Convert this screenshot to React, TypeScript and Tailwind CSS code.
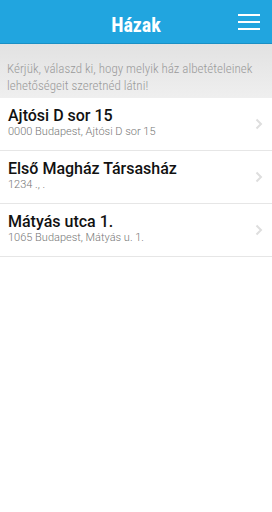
import React from "react";

const items = [
  { title: "Ajtósi D sor 15", sub: "0000 Budapest, Ajtósi D sor 15" },
  { title: "Első Magház Társasház", sub: "1234 ., ." },
  { title: "Mátyás utca 1.", sub: "1065 Budapest, Mátyás u. 1." },
];

export default function App() {
  return (
    <div className="w-[272px] h-[512px] bg-white" style={{ fontFamily: "Roboto, 'Noto Sans', sans-serif" }}>
      <header className="h-[44px] bg-[#21a5df] border-b border-[#1a8fc4] flex items-start justify-center pt-[15px] relative">
        <h1 className="text-white font-bold text-[20px] leading-none font-stretch-condensed">Házak</h1>
        <div className="absolute right-[12px] top-[14px] flex flex-col gap-[5px]">
          <span className="block w-[22px] h-[2px] bg-white" />
          <span className="block w-[22px] h-[2px] bg-white" />
          <span className="block w-[22px] h-[2px] bg-white" />
        </div>
      </header>
      <div className="h-[54px] bg-gradient-to-b from-[#e2e2e2] to-[#efefef] px-[7px] pt-[16px] text-[13px] leading-[17px] font-light text-[#9a9a9a] font-stretch-condensed">
        Kérjük, válaszd ki, hogy melyik ház albetételeinek lehetőségeit szeretnéd látni!
      </div>
      <ul>
        {items.map((it) => (
          <li key={it.title} className="h-[53px] border-b border-[#e6e6e6] flex items-center pl-[8px] pr-[8px]">
            <div className="flex-1 flex flex-col self-start pt-[8px]">
              <span className="text-[16px] leading-[20px] font-medium text-[#111]">{it.title}</span>
              <span className="text-[11px] leading-[11px] text-[#777] font-light">{it.sub}</span>
            </div>
            <svg width="8" height="12" viewBox="0 0 8 12" className="mr-[1px]">
              <path d="M1.5 1.5 L6 6 L1.5 10.5" stroke="#dedede" strokeWidth="2" fill="none" />
            </svg>
          </li>
        ))}
      </ul>
    </div>
  );
}
